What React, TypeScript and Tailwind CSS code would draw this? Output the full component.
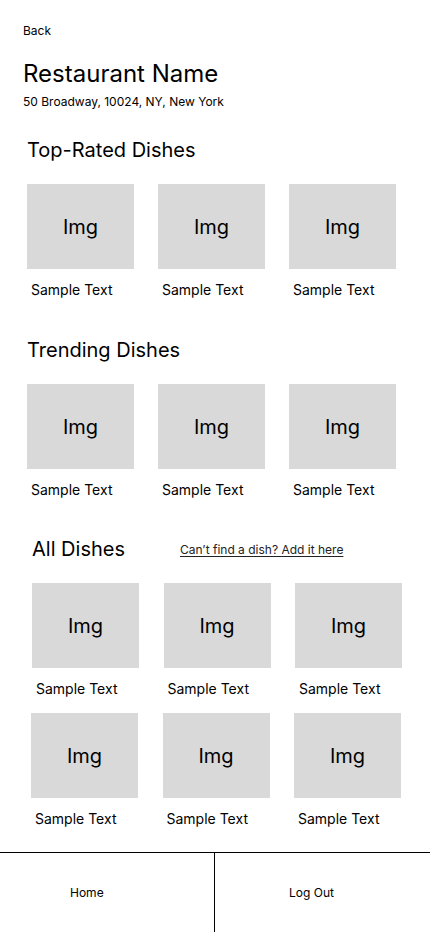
import React from "react";

const font = { fontFamily: "Inter, 'Noto Sans', sans-serif" };

function DishCard({ label }: { label: string }) {
  return (
    <div className="flex flex-col">
      <div className="w-[107px] h-[85px] bg-[#d9d9d9] flex items-center justify-center text-[20px] leading-[24px] text-black">
        Img
      </div>
      <span className="mt-[12px] pl-[4px] text-[14px] leading-[17px] text-black">{label}</span>
    </div>
  );
}

function DishRow({ className }: { className: string }) {
  return (
    <div className={`flex ${className}`}>
      <DishCard label="Sample Text" />
      <DishCard label="Sample Text" />
      <DishCard label="Sample Text" />
    </div>
  );
}

export default function App() {
  return (
    <div className="w-[430px] h-[932px] bg-white flex flex-col text-black" style={font}>
      <div className="pl-[23px]">
        <div className="mt-[23px] text-[12px] leading-[15px]">Back</div>
        <h1 className="mt-[21px] text-[24px] leading-[29px] font-normal">Restaurant Name</h1>
        <p className="mt-[6px] text-[12px] leading-[15px]">50 Broadway, 10024, NY, New York</p>
      </div>

      {/* Top rated */}
      <section className="pl-[27px]">
        <h2 className="mt-[29px] text-[20px] leading-[24px]">Top-Rated Dishes</h2>
        <DishRow className="mt-[22px] gap-[24px]" />
      </section>

      {/* Trending */}
      <section className="pl-[27px]">
        <h2 className="mt-[40px] text-[20px] leading-[24px]">Trending Dishes</h2>
        <DishRow className="mt-[22px] gap-[24px]" />
      </section>

      {/* All dishes */}
      <section className="pl-[32px]">
        <div className="mt-[39px] flex items-center">
          <h2 className="text-[20px] leading-[24px] w-[148px]">All Dishes</h2>
          <a className="text-[12px] leading-[15px] underline underline-offset-2 text-[#222]">
            Can’t find a dish? Add it here
          </a>
        </div>
        <DishRow className="mt-[22px] gap-[24.5px]" />
        <DishRow className="mt-[16px] gap-[24.5px] -ml-px" />
      </section>

      <nav className="mt-auto h-[80px] border-t border-black flex">
        <div className="w-[215px] border-r border-black flex items-center pl-[70px] text-[12px] leading-[15px]">
          Home
        </div>
        <div className="flex-1 flex items-center pl-[74px] text-[12px] leading-[15px]">Log Out</div>
      </nav>
    </div>
  );
}
